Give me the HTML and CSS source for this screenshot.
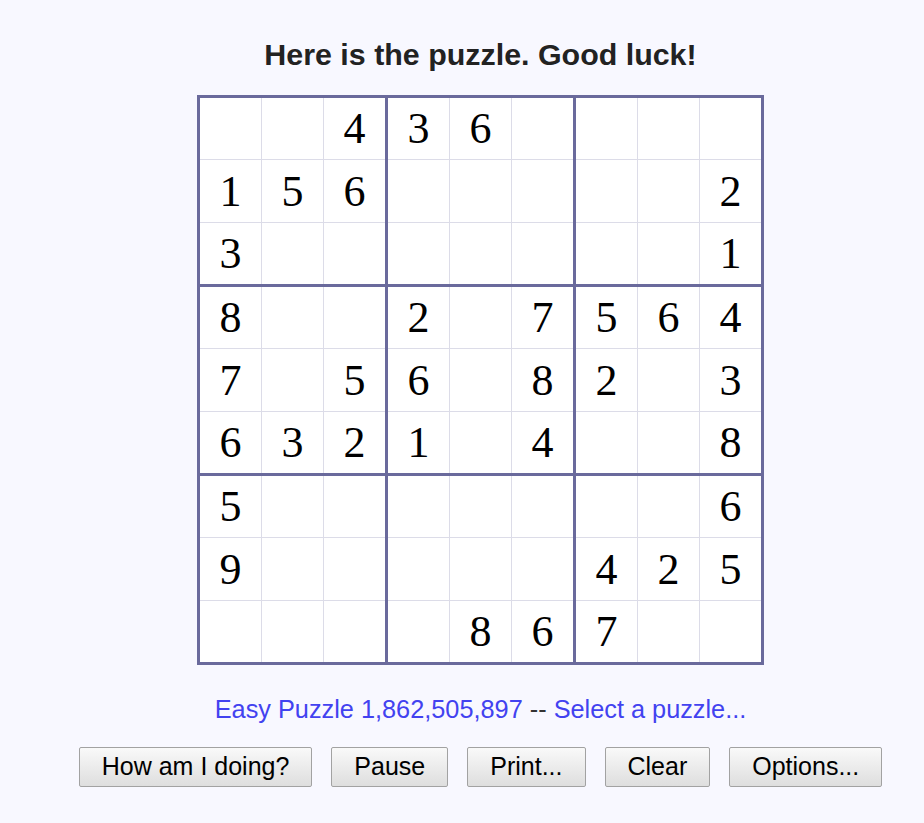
FILE: index.html
```html
<!DOCTYPE html>
<html>
<head>
<meta charset="utf-8">
<title>Sudoku</title>
<link rel="stylesheet" href="styles.css">
</head>
<body>
<div class="page">
  <h1 class="title">Here is the puzzle. Good luck!</h1>
  <div class="board">
    <div class="box"><div class="c"></div><div class="c"></div><div class="c">4</div><div class="c">1</div><div class="c">5</div><div class="c">6</div><div class="c">3</div><div class="c"></div><div class="c"></div></div>
    <div class="box"><div class="c">3</div><div class="c">6</div><div class="c"></div><div class="c"></div><div class="c"></div><div class="c"></div><div class="c"></div><div class="c"></div><div class="c"></div></div>
    <div class="box"><div class="c"></div><div class="c"></div><div class="c"></div><div class="c"></div><div class="c"></div><div class="c">2</div><div class="c"></div><div class="c"></div><div class="c">1</div></div>
    <div class="box"><div class="c">8</div><div class="c"></div><div class="c"></div><div class="c">7</div><div class="c"></div><div class="c">5</div><div class="c">6</div><div class="c">3</div><div class="c">2</div></div>
    <div class="box"><div class="c">2</div><div class="c"></div><div class="c">7</div><div class="c">6</div><div class="c"></div><div class="c">8</div><div class="c">1</div><div class="c"></div><div class="c">4</div></div>
    <div class="box"><div class="c">5</div><div class="c">6</div><div class="c">4</div><div class="c">2</div><div class="c"></div><div class="c">3</div><div class="c"></div><div class="c"></div><div class="c">8</div></div>
    <div class="box"><div class="c">5</div><div class="c"></div><div class="c"></div><div class="c">9</div><div class="c"></div><div class="c"></div><div class="c"></div><div class="c"></div><div class="c"></div></div>
    <div class="box"><div class="c"></div><div class="c"></div><div class="c"></div><div class="c"></div><div class="c"></div><div class="c"></div><div class="c"></div><div class="c">8</div><div class="c">6</div></div>
    <div class="box"><div class="c"></div><div class="c"></div><div class="c">6</div><div class="c">4</div><div class="c">2</div><div class="c">5</div><div class="c">7</div><div class="c"></div><div class="c"></div></div>
  </div>
  <p class="info"><a class="lnk" href="#">Easy Puzzle 1,862,505,897</a> -- <a class="lnk" href="#">Select a puzzle...</a></p>
  <div class="buttons">
    <button class="btn">How am I doing?</button>
    <button class="btn">Pause</button>
    <button class="btn">Print...</button>
    <button class="btn">Clear</button>
    <button class="btn">Options...</button>
  </div>
</div>
</body>
</html>
```
FILE: styles.css
```css
html, body {
  margin: 0;
  padding: 0;
  background: #f8f8ff;
}
.page {
  padding-left: 37px;
  display: flex;
  flex-direction: column;
  align-items: center;
  font-family: "Liberation Sans", Arial, sans-serif;
}
.title {
  margin: 37px 0 0 0;
  font-size: 30.4px;
  line-height: 34px;
  font-weight: bold;
  color: #222222;
}
.board {
  margin-top: 24px;
  display: grid;
  grid-template-columns: repeat(3, auto);
  gap: 3px;
  background: #6a6a9c;
  border: 3px solid #6a6a9c;
}
.box {
  display: grid;
  grid-template-columns: repeat(3, 61px);
  grid-template-rows: 61px 62px 61px;
  gap: 1px;
  background: #dcdce8;
}
.c {
  display: flex;
  align-items: center;
  justify-content: center;
  background: #ffffff;
  font-family: "Liberation Serif", "Times New Roman", serif;
  font-size: 44px;
  line-height: 61px;
  color: #000000;
}
.info {
  margin: 30px 0 0 0;
  font-size: 25.3px;
  line-height: 29px;
  color: #333333;
}
.lnk {
  color: #4242f0;
  text-decoration: none;
}
.buttons {
  margin-top: 23px;
  display: flex;
  gap: 19px;
}
.btn {
  font-family: "Liberation Sans", Arial, sans-serif;
  font-size: 25px;
  line-height: 29px;
  padding: 4px 22px 5px;
  color: #000000;
  background: linear-gradient(#f9f9f9, #dedede);
  border: 1px solid #a2a2a2;
  border-radius: 2px;
}
```
